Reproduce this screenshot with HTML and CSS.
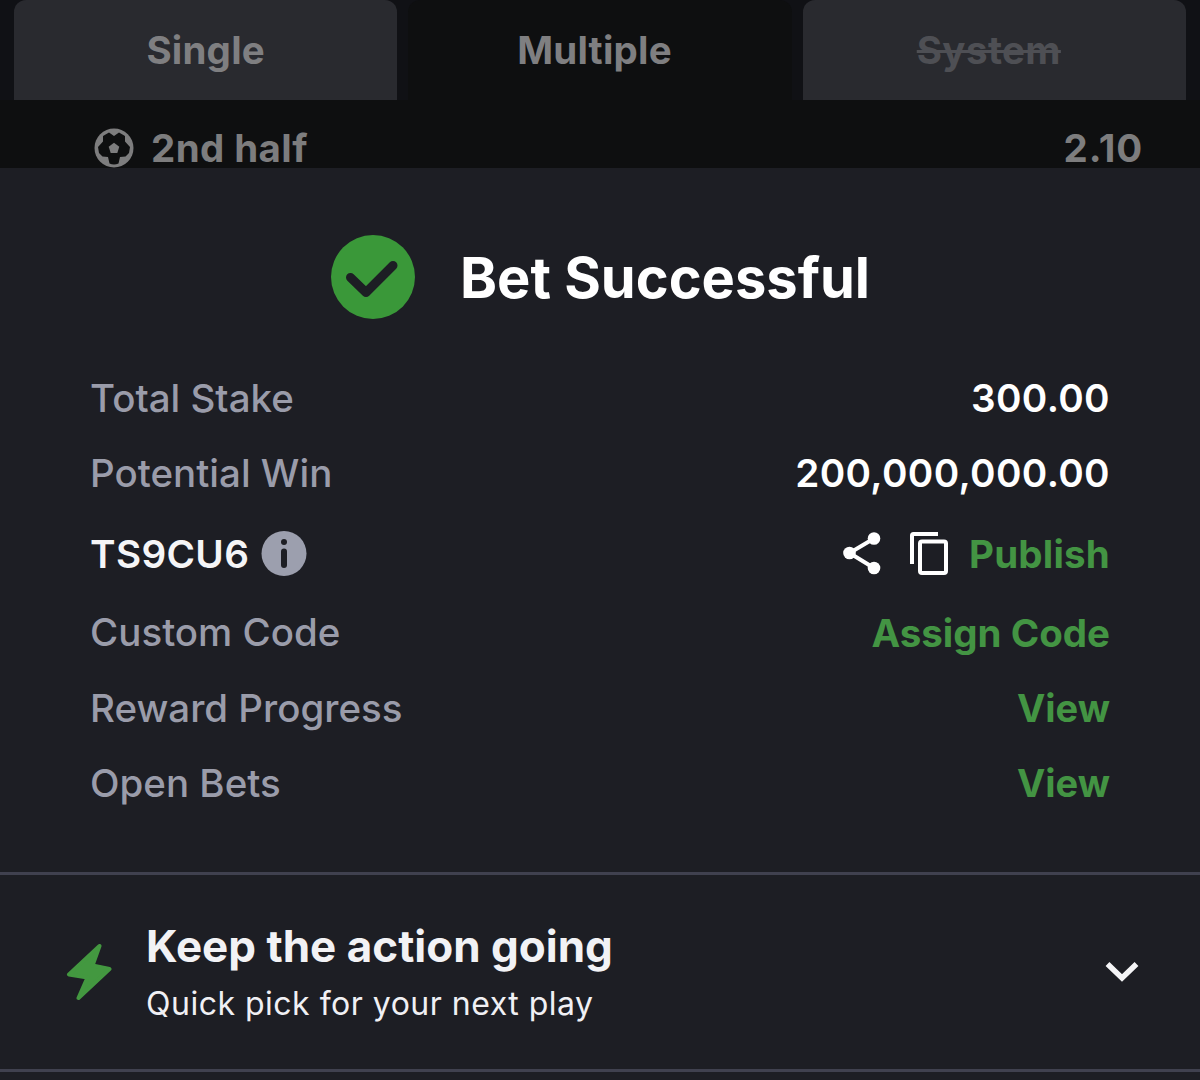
FILE: index.html
```html
<!DOCTYPE html>
<html lang="en">
<head>
<meta charset="utf-8">
<title>Bet Successful</title>
<link rel="stylesheet" href="styles.css">
</head>
<body>
<nav class="tabs">
  <div class="tab"><span>Single</span></div>
  <div class="tab active"><span>Multiple</span></div>
  <div class="tab disabled"><span>System</span></div>
</nav>
<div class="selection">
  <svg class="ball" viewBox="0 0 40 40"><circle cx="20" cy="20" r="19.500" fill="#7d7d7e"/><path d="M20 8l5-3.500 6 3.500v5.500l5 5.500-1 6-3.500 3.500-5.500.5-1.500 6.500q-4.500 2-9 0L14 29l-5.500-.5L5 25l-1-6 5-5.500V8l6-3.500z" fill="#0e0f10"/><path d="M20 14.800l5.300 3.900-2 6.200h-6.600l-2-6.200z" fill="#7d7d7e"/></svg>
  <span class="market">2nd half</span>
  <span class="odds">2.10</span>
</div>
<main class="receipt">
  <header class="success">
    <svg class="check" viewBox="0 0 84 84"><circle cx="42" cy="42" r="42" fill="#3a9839"/><path d="M19.500 42.500l15.500 15L62 30.500" fill="none" stroke="#1d1e24" stroke-width="9" stroke-linecap="round" stroke-linejoin="round"/></svg>
    <h1>Bet Successful</h1>
  </header>
  <section class="details">
    <div class="row"><span>Total Stake</span><b>300.00</b></div>
    <div class="row"><span>Potential Win</span><b>200,000,000.00</b></div>
    <div class="row code"><b>TS9CU6</b>
      <svg class="info" viewBox="0 0 46 46"><circle cx="23" cy="23.500" r="22.500" fill="#9c9fae"/><circle cx="23" cy="12" r="3" fill="#1d1e24"/><path d="M23 21.500v13.500" fill="none" stroke="#1d1e24" stroke-width="6" stroke-linecap="round"/></svg>
      <svg class="share" viewBox="0 0 40 44"><path d="M32 7.500L7.500 22 32 37" fill="none" stroke="#fff" stroke-width="4"/><g fill="#fff"><circle cx="32" cy="7.500" r="6.300"/><circle cx="7.500" cy="22" r="6.300"/><circle cx="32" cy="37" r="6.300"/></g></svg>
      <svg class="copy" viewBox="0 0 40 46"><path d="M3 34V5.500Q3 4 4.500 4H29" fill="none" stroke="#fff" stroke-width="4"/><rect x="11" y="11.500" width="26" height="31.500" rx="2" fill="none" stroke="#fff" stroke-width="4"/></svg>
      <a>Publish</a></div>
    <div class="row"><span>Custom Code</span><a>Assign Code</a></div>
    <div class="row"><span>Reward Progress</span><a class="view">View</a></div>
    <div class="row"><span>Open Bets</span><a class="view">View</a></div>
  </section>
</main>
<section class="quick">
  <svg class="bolt" viewBox="0 0 46 58"><path d="M33.500 3L3 31.500 21.500 34.500 12.500 55 43.500 26 26.500 22.500z" fill="#439840" stroke="#439840" stroke-width="4" stroke-linejoin="round"/></svg>
  <div class="quick-text"><h2>Keep the action going</h2><p>Quick pick for your next play</p></div>
  <svg class="chevron" viewBox="0 0 34 22"><path d="M2.500 3L17 17 31.500 3" fill="none" stroke="#f5f5f7" stroke-width="5.500"/></svg>
</section>
</body>
</html>
```
FILE: styles.css
```css
* { box-sizing: border-box; }
body { margin: 0; width: 1200px; height: 1080px; overflow: hidden; background: #1d1e24; color: #fff; font-family: Inter, sans-serif; font-size: 39px; }
svg { display: block; flex: none; }
.tabs { display: grid; grid-template-columns: repeat(3, 1fr); gap: 11px; height: 100px; padding: 0 14px; background: #101115; }
.tab { display: flex; align-items: center; justify-content: center; background: #292a2f; border-radius: 12px 12px 0 0; color: #7f7f81; font-weight: 700; font-size: 38.5px; letter-spacing: 0.2px; }
.active { background: #0e0f10; padding-right: 11px; }
.disabled { color: #4e4f54; padding-right: 11px; }
.disabled span { text-decoration: line-through; letter-spacing: 0.4px; }
.selection { display: flex; align-items: center; height: 68px; padding: 27px 57px 0 94px; background: #0e0f10; color: #7d7d7e; font-weight: 700; font-size: 38.5px; letter-spacing: 0.4px; }
.ball { width: 40px; height: 40px; margin-right: 17px; }
.odds { margin-left: auto; letter-spacing: 0.8px; }
.receipt { height: 704px; }
.success { display: flex; align-items: center; height: 218px; padding-left: 331px; gap: 45px; }
.check { width: 84px; height: 84px; }
h1 { margin: 0; padding-top: 1px; font-size: 56px; font-weight: 700; }
.details { padding: 0 90px; margin-top: -25px; }
.row { display: flex; align-items: center; justify-content: space-between; height: 75.2px; color: #9a9caa; font-weight: 480; font-size: 38.5px; white-space: nowrap; }
.row span { margin-top: -1px; }
.row b { margin-top: -1px; color: #fff; font-weight: 620; font-size: 38.7px; letter-spacing: 0.35px; }
.row a { color: #439443; font-weight: 650; font-size: 38.5px; }
.row .view { font-size: 38px; }
.row.code { height: 84px; }
.code b { margin-top: 1px; color: #f5f5f7; }
.code a { margin-top: 1px; letter-spacing: 0.2px; }
.info { width: 46px; height: 46px; margin: 0 auto 0 12px; }
.share { width: 40px; height: 44px; margin-right: 27px; }
.copy { width: 40px; height: 46px; margin-right: 20px; }
.quick { display: flex; align-items: center; height: 200px; padding: 0 61px 0 66px; border-top: 3px solid #40414f; border-bottom: 3px solid #40414f; }
.bolt { width: 46px; height: 58px; margin-right: 34px; }
.quick-text { flex: 1; padding-top: 6px; }
h2 { margin: 0; font-size: 44px; line-height: 58px; font-weight: 700; color: #f2f2f5; }
p { margin: 0; font-size: 32px; line-height: 58px; letter-spacing: 0.5px; color: #f0f0f4; }
.chevron { width: 34px; height: 22px; }
```
